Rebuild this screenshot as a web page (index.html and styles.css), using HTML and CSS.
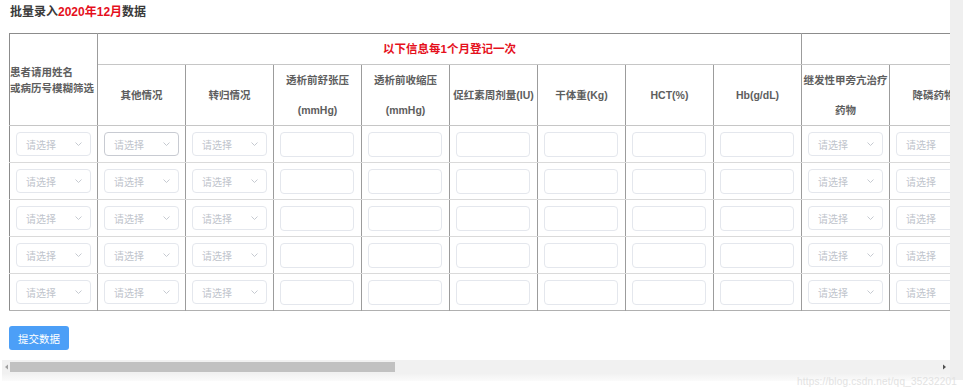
FILE: index.html
```html
<!DOCTYPE html>
<html lang="zh-CN">
<head>
<meta charset="utf-8">
<title>批量录入</title>
<link rel="stylesheet" href="styles.css">
</head>
<body>
<div class="page">
  <div class="main">
    <div class="content">
      <h1 class="title">批量录入<span class="red">2020年12月</span>数据</h1>
      <div class="table-clip">
        <table class="grid">
          <colgroup>
            <col class="c"><col class="c"><col class="c"><col class="c"><col class="c"><col class="c"><col class="c"><col class="c"><col class="c"><col class="c"><col class="c">
          </colgroup>
          <thead>
            <tr class="h1">
              <th rowspan="2" class="patient">患者请用姓名<br>或病历号模糊筛选</th>
              <th colspan="8" class="notice">以下信息每1个月登记一次</th>
              <th colspan="2"></th>
            </tr>
            <tr class="h2">
              <th>其他情况</th>
              <th>转归情况</th>
              <th>透析前舒张压<br>(mmHg)</th>
              <th>透析前收缩压<br>(mmHg)</th>
              <th>促红素周剂量(IU)</th>
              <th>干体重(Kg)</th>
              <th>HCT(%)</th>
              <th>Hb(g/dL)</th>
              <th>继发性甲旁亢治疗<br>药物</th>
              <th>降磷药物</th>
            </tr>
          </thead>
          <tbody id="rows">
            <tr>
              <td><div class="sel"><span>请选择</span><svg width="7" height="4" viewBox="0 0 7 4"><polyline points="0.5,0.5 3.5,3.5 6.5,0.5" fill="none" stroke="#c0c4cc" stroke-width="0.9"/></svg></div></td>
              <td><div class="sel sel-hover"><span>请选择</span><svg width="7" height="4" viewBox="0 0 7 4"><polyline points="0.5,0.5 3.5,3.5 6.5,0.5" fill="none" stroke="#c0c4cc" stroke-width="0.9"/></svg></div></td>
              <td><div class="sel"><span>请选择</span><svg width="7" height="4" viewBox="0 0 7 4"><polyline points="0.5,0.5 3.5,3.5 6.5,0.5" fill="none" stroke="#c0c4cc" stroke-width="0.9"/></svg></div></td>
              <td><div class="inp"></div></td>
              <td><div class="inp"></div></td>
              <td><div class="inp"></div></td>
              <td><div class="inp"></div></td>
              <td><div class="inp"></div></td>
              <td><div class="inp"></div></td>
              <td><div class="sel"><span>请选择</span><svg width="7" height="4" viewBox="0 0 7 4"><polyline points="0.5,0.5 3.5,3.5 6.5,0.5" fill="none" stroke="#c0c4cc" stroke-width="0.9"/></svg></div></td>
              <td><div class="sel"><span>请选择</span><svg width="7" height="4" viewBox="0 0 7 4"><polyline points="0.5,0.5 3.5,3.5 6.5,0.5" fill="none" stroke="#c0c4cc" stroke-width="0.9"/></svg></div></td>
            </tr>
            <tr>
              <td><div class="sel"><span>请选择</span><svg width="7" height="4" viewBox="0 0 7 4"><polyline points="0.5,0.5 3.5,3.5 6.5,0.5" fill="none" stroke="#c0c4cc" stroke-width="0.9"/></svg></div></td>
              <td><div class="sel"><span>请选择</span><svg width="7" height="4" viewBox="0 0 7 4"><polyline points="0.5,0.5 3.5,3.5 6.5,0.5" fill="none" stroke="#c0c4cc" stroke-width="0.9"/></svg></div></td>
              <td><div class="sel"><span>请选择</span><svg width="7" height="4" viewBox="0 0 7 4"><polyline points="0.5,0.5 3.5,3.5 6.5,0.5" fill="none" stroke="#c0c4cc" stroke-width="0.9"/></svg></div></td>
              <td><div class="inp"></div></td>
              <td><div class="inp"></div></td>
              <td><div class="inp"></div></td>
              <td><div class="inp"></div></td>
              <td><div class="inp"></div></td>
              <td><div class="inp"></div></td>
              <td><div class="sel"><span>请选择</span><svg width="7" height="4" viewBox="0 0 7 4"><polyline points="0.5,0.5 3.5,3.5 6.5,0.5" fill="none" stroke="#c0c4cc" stroke-width="0.9"/></svg></div></td>
              <td><div class="sel"><span>请选择</span><svg width="7" height="4" viewBox="0 0 7 4"><polyline points="0.5,0.5 3.5,3.5 6.5,0.5" fill="none" stroke="#c0c4cc" stroke-width="0.9"/></svg></div></td>
            </tr>
            <tr>
              <td><div class="sel"><span>请选择</span><svg width="7" height="4" viewBox="0 0 7 4"><polyline points="0.5,0.5 3.5,3.5 6.5,0.5" fill="none" stroke="#c0c4cc" stroke-width="0.9"/></svg></div></td>
              <td><div class="sel"><span>请选择</span><svg width="7" height="4" viewBox="0 0 7 4"><polyline points="0.5,0.5 3.5,3.5 6.5,0.5" fill="none" stroke="#c0c4cc" stroke-width="0.9"/></svg></div></td>
              <td><div class="sel"><span>请选择</span><svg width="7" height="4" viewBox="0 0 7 4"><polyline points="0.5,0.5 3.5,3.5 6.5,0.5" fill="none" stroke="#c0c4cc" stroke-width="0.9"/></svg></div></td>
              <td><div class="inp"></div></td>
              <td><div class="inp"></div></td>
              <td><div class="inp"></div></td>
              <td><div class="inp"></div></td>
              <td><div class="inp"></div></td>
              <td><div class="inp"></div></td>
              <td><div class="sel"><span>请选择</span><svg width="7" height="4" viewBox="0 0 7 4"><polyline points="0.5,0.5 3.5,3.5 6.5,0.5" fill="none" stroke="#c0c4cc" stroke-width="0.9"/></svg></div></td>
              <td><div class="sel"><span>请选择</span><svg width="7" height="4" viewBox="0 0 7 4"><polyline points="0.5,0.5 3.5,3.5 6.5,0.5" fill="none" stroke="#c0c4cc" stroke-width="0.9"/></svg></div></td>
            </tr>
            <tr>
              <td><div class="sel"><span>请选择</span><svg width="7" height="4" viewBox="0 0 7 4"><polyline points="0.5,0.5 3.5,3.5 6.5,0.5" fill="none" stroke="#c0c4cc" stroke-width="0.9"/></svg></div></td>
              <td><div class="sel"><span>请选择</span><svg width="7" height="4" viewBox="0 0 7 4"><polyline points="0.5,0.5 3.5,3.5 6.5,0.5" fill="none" stroke="#c0c4cc" stroke-width="0.9"/></svg></div></td>
              <td><div class="sel"><span>请选择</span><svg width="7" height="4" viewBox="0 0 7 4"><polyline points="0.5,0.5 3.5,3.5 6.5,0.5" fill="none" stroke="#c0c4cc" stroke-width="0.9"/></svg></div></td>
              <td><div class="inp"></div></td>
              <td><div class="inp"></div></td>
              <td><div class="inp"></div></td>
              <td><div class="inp"></div></td>
              <td><div class="inp"></div></td>
              <td><div class="inp"></div></td>
              <td><div class="sel"><span>请选择</span><svg width="7" height="4" viewBox="0 0 7 4"><polyline points="0.5,0.5 3.5,3.5 6.5,0.5" fill="none" stroke="#c0c4cc" stroke-width="0.9"/></svg></div></td>
              <td><div class="sel"><span>请选择</span><svg width="7" height="4" viewBox="0 0 7 4"><polyline points="0.5,0.5 3.5,3.5 6.5,0.5" fill="none" stroke="#c0c4cc" stroke-width="0.9"/></svg></div></td>
            </tr>
            <tr>
              <td><div class="sel"><span>请选择</span><svg width="7" height="4" viewBox="0 0 7 4"><polyline points="0.5,0.5 3.5,3.5 6.5,0.5" fill="none" stroke="#c0c4cc" stroke-width="0.9"/></svg></div></td>
              <td><div class="sel"><span>请选择</span><svg width="7" height="4" viewBox="0 0 7 4"><polyline points="0.5,0.5 3.5,3.5 6.5,0.5" fill="none" stroke="#c0c4cc" stroke-width="0.9"/></svg></div></td>
              <td><div class="sel"><span>请选择</span><svg width="7" height="4" viewBox="0 0 7 4"><polyline points="0.5,0.5 3.5,3.5 6.5,0.5" fill="none" stroke="#c0c4cc" stroke-width="0.9"/></svg></div></td>
              <td><div class="inp"></div></td>
              <td><div class="inp"></div></td>
              <td><div class="inp"></div></td>
              <td><div class="inp"></div></td>
              <td><div class="inp"></div></td>
              <td><div class="inp"></div></td>
              <td><div class="sel"><span>请选择</span><svg width="7" height="4" viewBox="0 0 7 4"><polyline points="0.5,0.5 3.5,3.5 6.5,0.5" fill="none" stroke="#c0c4cc" stroke-width="0.9"/></svg></div></td>
              <td><div class="sel"><span>请选择</span><svg width="7" height="4" viewBox="0 0 7 4"><polyline points="0.5,0.5 3.5,3.5 6.5,0.5" fill="none" stroke="#c0c4cc" stroke-width="0.9"/></svg></div></td>
            </tr>
          </tbody>
        </table>
      </div>
      <button class="submit" type="button">提交数据</button>
    </div>
    <div class="hscroll">
      <svg class="arrow" width="5" height="6" viewBox="0 0 5 6"><polygon points="4,0.5 4,5.5 1,3" fill="#a0a0a0"/></svg>
      <div class="thumb"></div>
      <div class="spacer"></div>
      <svg class="arrow" width="5" height="6" viewBox="0 0 5 6"><polygon points="1,0.5 1,5.5 4,3" fill="#505050"/></svg>
    </div>
    <div class="shadow"></div>
  </div>
  <div class="vstrip"></div>
  <div class="watermark">https://blog.csdn.net/qq_35232201</div>
</div>
</body>
</html>
```
FILE: styles.css
```css
* { box-sizing: border-box; }
html, body {
  margin: 0;
  padding: 0;
  background: #ffffff;
}
body {
  font-family: "Liberation Sans", "Noto Sans CJK SC", sans-serif;
  color: #333;
}
.page {
  position: relative;
  display: flex;
  align-items: flex-start;
  width: 967px;
  height: 392px;
  overflow: hidden;
}
.main {
  width: 948px;
  margin-left: 2px;
  display: flex;
  flex-direction: column;
}
.content {
  padding-left: 7px;
  display: flex;
  flex-direction: column;
  align-items: flex-start;
}
.title {
  margin: 4px 0 0 1px;
  font-size: 12px;
  line-height: 17px;
  font-weight: bold;
  color: #3a3a3a;
}
.red { color: #e5101c; }
.table-clip {
  margin-top: 12px;
  width: 941px;
  overflow: hidden;
}
.grid {
  border-collapse: collapse;
  table-layout: fixed;
  width: 968px;
  border-top: 1px solid #8c8c8c;
  border-left: 1px solid #8c8c8c;
  border-bottom: 1px solid #b0b0b0;
}
.grid col.c { width: 88px; }
.grid th, .grid td {
  border-right: 1px solid #9c9c9c;
  padding: 0;
  vertical-align: middle;
}
.grid th {
  font-size: 10.5px;
  font-weight: bold;
  color: #5e5e5e;
  text-align: center;
  line-height: 30px;
  white-space: nowrap;
  overflow: hidden;
}
.h1 { height: 31px; }
.h1 th { border-bottom: 1px solid #c6c6c6; }
.h2 { height: 61px; }
.h2 th { border-bottom: 1px solid #c6c6c6; }
.grid th.patient {
  text-align: left;
  line-height: 16px;
  padding-top: 1px;
  border-bottom: 1px solid #c6c6c6;
}
.grid th.notice {
  color: #e5101c;
  font-size: 11.5px;
}
.grid tbody tr { height: 37px; }
.grid tbody td {
  border-bottom: 1px solid #dadada;
  padding-left: 6px;
}
.grid tbody tr:last-child td { border-bottom: none; }
.sel {
  width: 75px;
  height: 24px;
  border: 1px solid #e4e7ed;
  border-radius: 4px;
  display: flex;
  align-items: center;
  justify-content: space-between;
  padding: 0 8px 0 9px;
  font-size: 10px;
  color: #c0c4cc;
  background: #fff;
  white-space: nowrap;
}
.sel-hover { border-color: #c8cbd2; }
.inp {
  width: 74px;
  height: 25px;
  border: 1px solid #e4e7ed;
  border-radius: 4px;
  background: #fff;
}
.submit {
  margin-top: 15px;
  margin-left: 0;
  width: 60px;
  height: 24px;
  border: none;
  border-radius: 3px;
  background: #4c9ff7;
  color: #ffffff;
  font-family: "Liberation Sans", "Noto Sans CJK SC", sans-serif;
  font-size: 10.5px;
  padding: 0;
}
.hscroll {
  margin-top: 10px;
  width: 950px;
  height: 14px;
  background: #f1f1f1;
  display: flex;
  align-items: center;
}
.arrow { flex: none; margin: 0 2px; }
.thumb {
  width: 385px;
  height: 10px;
  background: #c1c1c1;
  margin-left: -1px;
}
.spacer { flex: 1; }
.hscroll .arrow:last-child { margin-right: 5px; }
.shadow {
  height: 7px;
  width: 950px;
  background: linear-gradient(#f2f2f2, #fbfbfb);
}
.vstrip {
  width: 13px;
  height: 380px;
  background: #efefef;
}
.watermark {
  position: absolute;
  right: 10px;
  top: 376px;
  font-size: 10px;
  color: #e2e2e2;
  letter-spacing: 0.2px;
}
```
